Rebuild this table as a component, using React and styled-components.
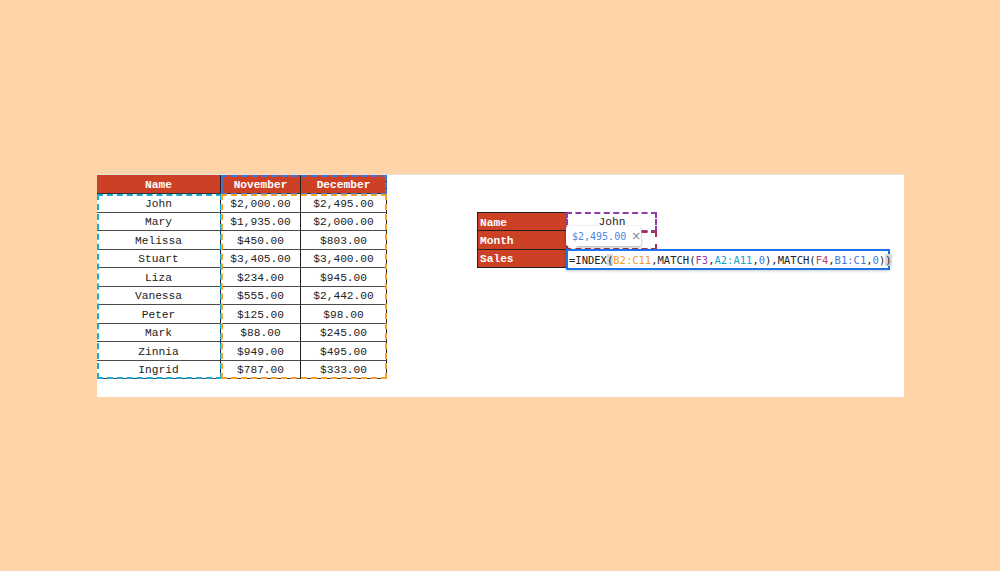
import React from "react";
import styled, { createGlobalStyle } from "styled-components";

const Global = createGlobalStyle`
  html, body { margin: 0; padding: 0; background: #ffd4a9; }
  body { font-family: "Liberation Mono", "DejaVu Sans Mono", monospace; }
`;

const Page = styled.div`
  width: 1000px;
  height: 571px;
  padding: 175px 0 0 97px;
  box-sizing: border-box;
`;

const Panel = styled.div`
  width: 807px;
  height: 222px;
  background: #fff;
  box-shadow: 0 -1px 0 #e2e2e2;
  display: flex;
  align-items: flex-start;
`;

const TableWrap = styled.div`
  position: relative;
  width: 290px;
`;

const Grid = styled.div`
  display: grid;
  grid-template-columns: 124px 80px 86px;
  grid-template-rows: 19px repeat(10, 18.5px);
`;

const HeadCell = styled.div`
  background: #cc4125;
  color: #fff;
  font-weight: bold;
  font-size: 11.2px;
  display: flex;
  align-items: center;
  justify-content: center;
  padding-top: 2px;
  border-right: 1px solid #222;
  border-bottom: 1px solid #333;
  box-sizing: border-box;
`;

const Cell = styled.div`
  color: #222;
  font-size: 11.2px;
  display: flex;
  align-items: center;
  justify-content: center;
  border-right: 1px solid #222;
  border-bottom: 1px solid #4a4a4a;
  box-sizing: border-box;
  padding-top: 2px;
`;

const Dashed = styled.div`
  position: absolute;
  left: ${(p) => p.$l}px;
  top: ${(p) => p.$t}px;
  width: ${(p) => p.$w}px;
  height: ${(p) => p.$h}px;
  border: 2px dashed ${(p) => p.$c};
  box-sizing: border-box;
  pointer-events: none;
`;

const Lookup = styled.div`
  position: relative;
  margin: 37px 0 0 90px;
  width: 180px;
`;

const LookGrid = styled.div`
  display: grid;
  grid-template-columns: 89px 90px;
  grid-template-rows: 19px 18.5px 18.5px;
  border-left: 1px solid #222;
`;

const Label = styled.div`
  background: #cc4125;
  color: #fff;
  font-weight: bold;
  font-size: 11.2px;
  display: flex;
  align-items: center;
  padding: 2px 0 0 2px;
  border-top: ${(p) => (p.$first ? "1px solid #222" : "none")};
  border-bottom: 1px solid #222;
  box-sizing: border-box;
`;

const Value = styled.div`
  color: #222;
  font-size: 11.2px;
  display: flex;
  align-items: center;
  justify-content: center;
  padding-top: 1px;
  box-sizing: border-box;
`;

const Editor = styled.div`
  position: absolute;
  left: 89px;
  top: 37px;
  width: 324px;
  height: 21px;
  border: 2px solid #1a73e8;
  background: #fff;
  box-sizing: border-box;
  display: flex;
  align-items: center;
  padding-left: 1px;
  font-family: "DejaVu Sans Mono", monospace;
  font-size: 10.5px;
  color: #222;
  white-space: nowrap;
  box-shadow: 0 1px 3px rgba(0, 0, 0, 0.2);
`;

const Ref = styled.span`
  color: ${(p) => p.$c};
`;

const Paren = styled.span`
  background: ${(p) => (p.$hl ? "#d9d9d9" : "transparent")};
`;

const Tip = styled.div`
  position: absolute;
  left: 89px;
  top: 14px;
  width: 75px;
  height: 20px;
  background: #fff;
  border-radius: 2px;
  box-shadow: 0 1px 3px rgba(0, 0, 0, 0.35);
  display: flex;
  align-items: center;
  padding-left: 6px;
  box-sizing: border-box;
  font-family: "DejaVu Sans Mono", monospace;
  font-size: 10px;
  color: #4a86e8;
  gap: 5px;
  &::after {
    content: "";
    position: absolute;
    left: 3px;
    bottom: -5px;
    border-left: 4px solid transparent;
    border-right: 4px solid transparent;
    border-top: 5px solid #fff;
  }
`;

const Close = styled.span`
  color: #888;
  font-family: "DejaVu Sans", sans-serif;
  font-size: 12px;
`;

const rows = [
  ["John", "$2,000.00", "$2,495.00"],
  ["Mary", "$1,935.00", "$2,000.00"],
  ["Melissa", "$450.00", "$803.00"],
  ["Stuart", "$3,405.00", "$3,400.00"],
  ["Liza", "$234.00", "$945.00"],
  ["Vanessa", "$555.00", "$2,442.00"],
  ["Peter", "$125.00", "$98.00"],
  ["Mark", "$88.00", "$245.00"],
  ["Zinnia", "$949.00", "$495.00"],
  ["Ingrid", "$787.00", "$333.00"],
];

export default function App() {
  return (
    <>
      <Global />
      <Page>
        <Panel>
          <TableWrap>
            <Grid>
              <HeadCell>Name</HeadCell>
              <HeadCell>November</HeadCell>
              <HeadCell>December</HeadCell>
              {rows.map((r) => (
                <React.Fragment key={r[0]}>
                  <Cell>{r[0]}</Cell>
                  <Cell>{r[1]}</Cell>
                  <Cell>{r[2]}</Cell>
                </React.Fragment>
              ))}
            </Grid>
            <Dashed $l={0} $t={19} $w={125} $h={185} $c="#19a9d1" />
            <Dashed $l={124} $t={0} $w={166} $h={20} $c="#3c78d8" />
            <Dashed $l={124} $t={19} $w={166} $h={185} $c="#f6a026" />
          </TableWrap>
          <Lookup>
            <LookGrid>
              <Label $first>Name</Label>
              <Value>John</Value>
              <Label>Month</Label>
              <Value />
              <Label>Sales</Label>
              <Value />
            </LookGrid>
            <Dashed $l={89} $t={0} $w={91} $h={20} $c="#8e3ca8" />
            <Dashed $l={89} $t={19} $w={91} $h={19} $c="#a8324f" />
            <Tip>
              $2,495.00<Close>×</Close>
            </Tip>
            <Editor>
              =INDEX<Paren $hl>(</Paren>
              <Ref $c="#f29b1d">B2:C11</Ref>,MATCH(
              <Ref $c="#9c3fb3">F3</Ref>,<Ref $c="#17a2c8">A2:A11</Ref>,
              <Ref $c="#3c78d8">0</Ref>),MATCH(
              <Ref $c="#c2406a">F4</Ref>,<Ref $c="#3c78d8">B1:C1</Ref>,
              <Ref $c="#3c78d8">0</Ref>)<Paren $hl>)</Paren>
            </Editor>
          </Lookup>
        </Panel>
      </Page>
    </>
  );
}
